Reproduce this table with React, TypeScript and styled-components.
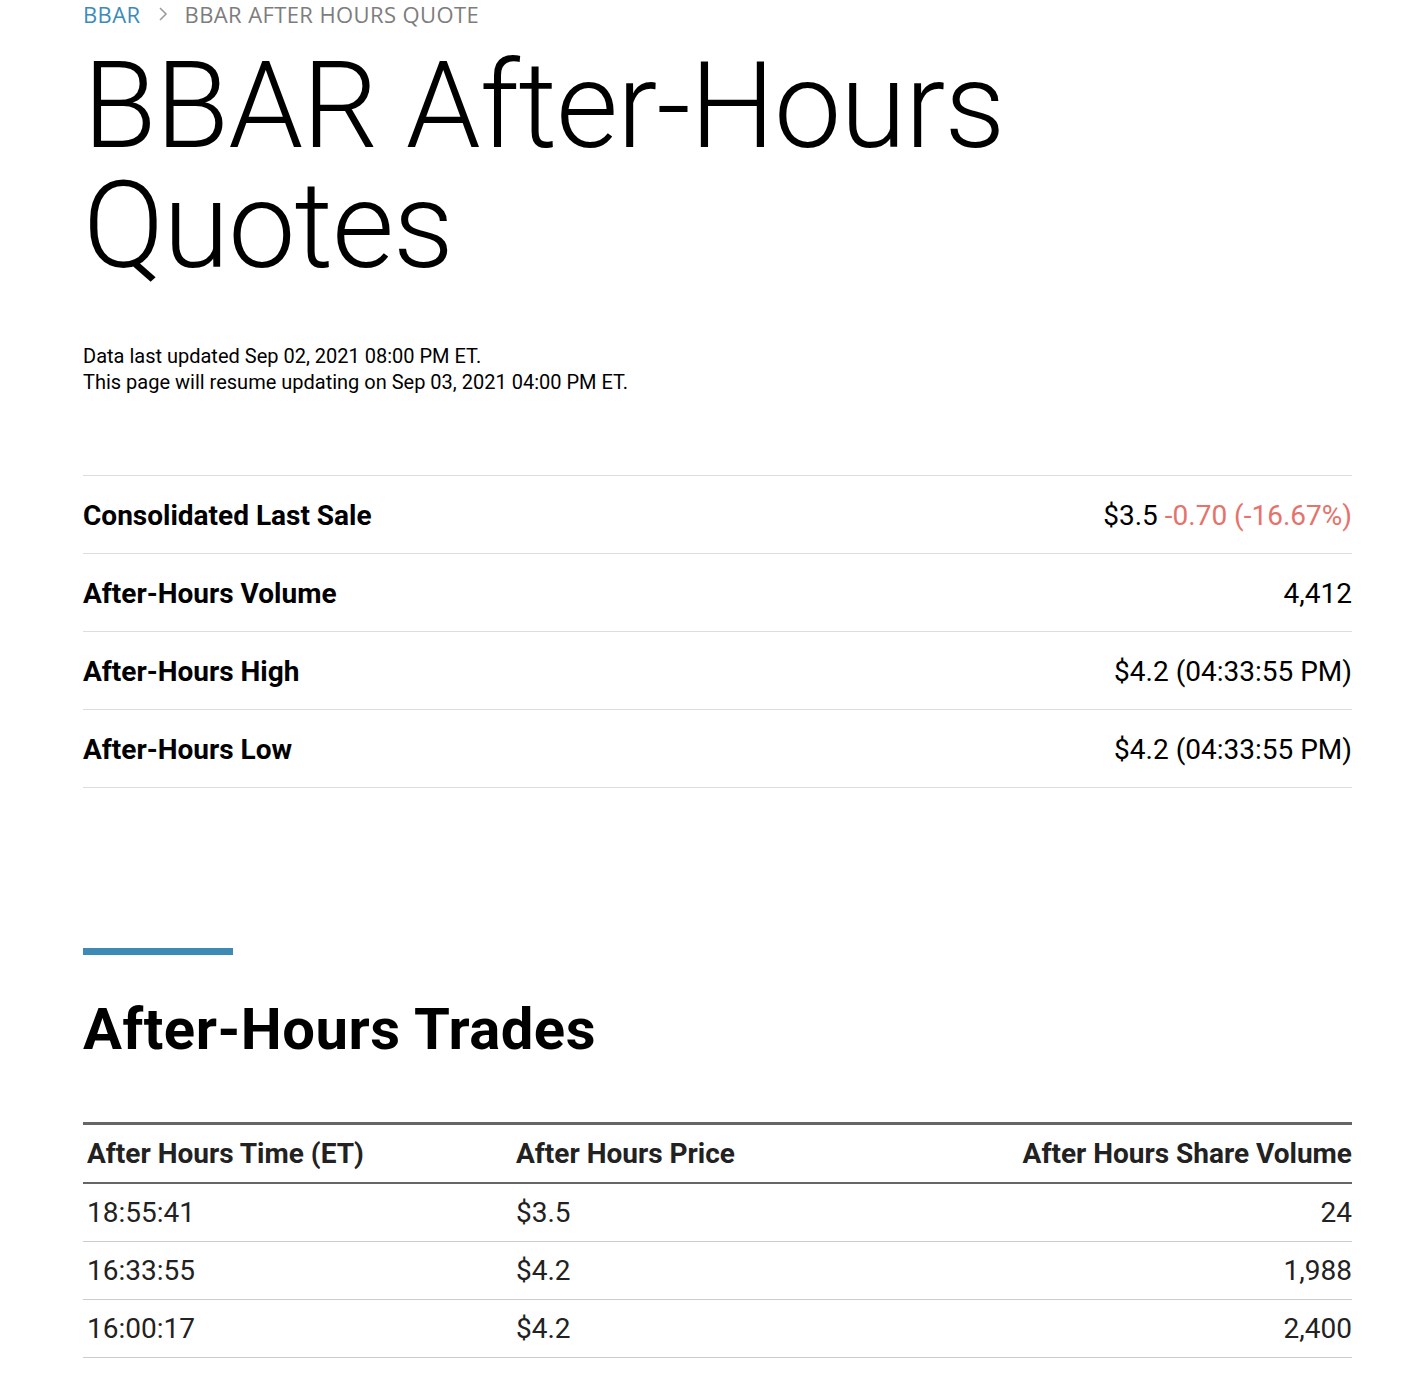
import React from 'react'
import styled, { createGlobalStyle } from 'styled-components'

const Global = createGlobalStyle`
  html, body { margin: 0; padding: 0; background: #fff; }
  body { font-family: Roboto, "Liberation Sans", sans-serif; color: #000; }
`

const summary = [
  { label: 'Consolidated Last Sale', value: '$3.5', change: '-0.70 (-16.67%)' },
  { label: 'After-Hours Volume', value: '4,412' },
  { label: 'After-Hours High', value: '$4.2 (04:33:55 PM)' },
  { label: 'After-Hours Low', value: '$4.2 (04:33:55 PM)' },
]

const trades = [
  ['18:55:41', '$3.5', '24'],
  ['16:33:55', '$4.2', '1,988'],
  ['16:00:17', '$4.2', '2,400'],
]

export default function App() {
  return (
    <Page>
      <Global />
      <Crumbs>
        <CrumbLink>BBAR</CrumbLink>
        <Chevron viewBox="0 0 10 16">
          <path d="M2 2l6 6-6 6" fill="none" stroke="#999" strokeWidth="1.5" />
        </Chevron>
        <CrumbCurrent>BBAR AFTER HOURS QUOTE</CrumbCurrent>
      </Crumbs>
      <Title>BBAR After-Hours Quotes</Title>
      <Updated>
        Data last updated Sep 02, 2021 08:00 PM ET.
        <br />
        This page will resume updating on Sep 03, 2021 04:00 PM ET.
      </Updated>
      <Summary>
        {summary.map((row) => (
          <SummaryRow key={row.label}>
            <SummaryLabel>{row.label}</SummaryLabel>
            <SummaryValue>
              {row.value}
              {row.change && <Down> {row.change}</Down>}
            </SummaryValue>
          </SummaryRow>
        ))}
      </Summary>
      <Accent />
      <SectionTitle>After-Hours Trades</SectionTitle>
      <Trades>
        <thead>
          <tr>
            <Th>After Hours Time (ET)</Th>
            <Th>After Hours Price</Th>
            <Th $right>After Hours Share Volume</Th>
          </tr>
        </thead>
        <tbody>
          {trades.map((t) => (
            <tr key={t[0]}>
              <Td>{t[0]}</Td>
              <Td>{t[1]}</Td>
              <Td $right>{t[2]}</Td>
            </tr>
          ))}
        </tbody>
      </Trades>
    </Page>
  )
}

const Page = styled.div`
  width: 1269px;
  margin-left: 83px;
  padding-bottom: 34px;
`

const Crumbs = styled.div`
  display: flex;
  align-items: center;
  gap: 17px;
  height: 24px;
  padding-top: 2px;
  line-height: 24px;
  font-family: 'Open Sans', 'Noto Sans', sans-serif;
  font-size: 22px;
  letter-spacing: 0.4px;
`

const CrumbLink = styled.span`
  color: #3b8bba;
`

const CrumbCurrent = styled.span`
  color: #7d7d7d;
`

const Chevron = styled.svg`
  width: 10px;
  height: 16px;
`

const Title = styled.h1`
  margin: 20px 0 0;
  width: 960px;
  font-family: Roboto, sans-serif;
  font-weight: 300;
  font-size: 120px;
  line-height: 120px;
  letter-spacing: -1px;
`

const Updated = styled.p`
  margin: 57px 0 0;
  font-size: 20px;
  line-height: 26px;
  color: #000;
`

const Summary = styled.div`
  margin-top: 80px;
  border-top: 1px solid #ddd;
`

const SummaryRow = styled.div`
  display: flex;
  justify-content: space-between;
  align-items: center;
  box-sizing: border-box;
  height: 78px;
  padding-top: 2px;
  border-bottom: 1px solid #ddd;
`

const SummaryLabel = styled.span`
  font-weight: 700;
  font-size: 28px;
`

const SummaryValue = styled.span`
  font-size: 28px;
`

const Down = styled.span`
  color: #e5736b;
`

const Accent = styled.div`
  width: 150px;
  height: 7px;
  background: #3d8ab5;
  margin-top: 160px;
`

const SectionTitle = styled.h2`
  margin: 38px 0 0;
  font-size: 58px;
  line-height: 72px;
  font-weight: 700;
  letter-spacing: 0.5px;
`

const Trades = styled.table`
  width: 100%;
  margin-top: 57px;
  border-collapse: collapse;
  border-top: 3px solid #666;
  color: #222;
`

const Th = styled.th<{ $right?: boolean }>`
  text-align: ${(p) => (p.$right ? 'right' : 'left')};
  font-size: 28px;
  font-weight: 700;
  height: 57px;
  padding: 0 0 0 4px;
  border-bottom: 2px solid #666;
  color: #222;
  &:nth-child(2) { padding-left: 0; }
`

const Td = styled.td<{ $right?: boolean }>`
  text-align: ${(p) => (p.$right ? 'right' : 'left')};
  font-size: 28px;
  height: 57px;
  padding: 0 0 0 4px;
  border-bottom: 1px solid #ccc;
  color: #222;
  &:first-child { width: 429px; }
  &:nth-child(2) { padding-left: 0; }
`
